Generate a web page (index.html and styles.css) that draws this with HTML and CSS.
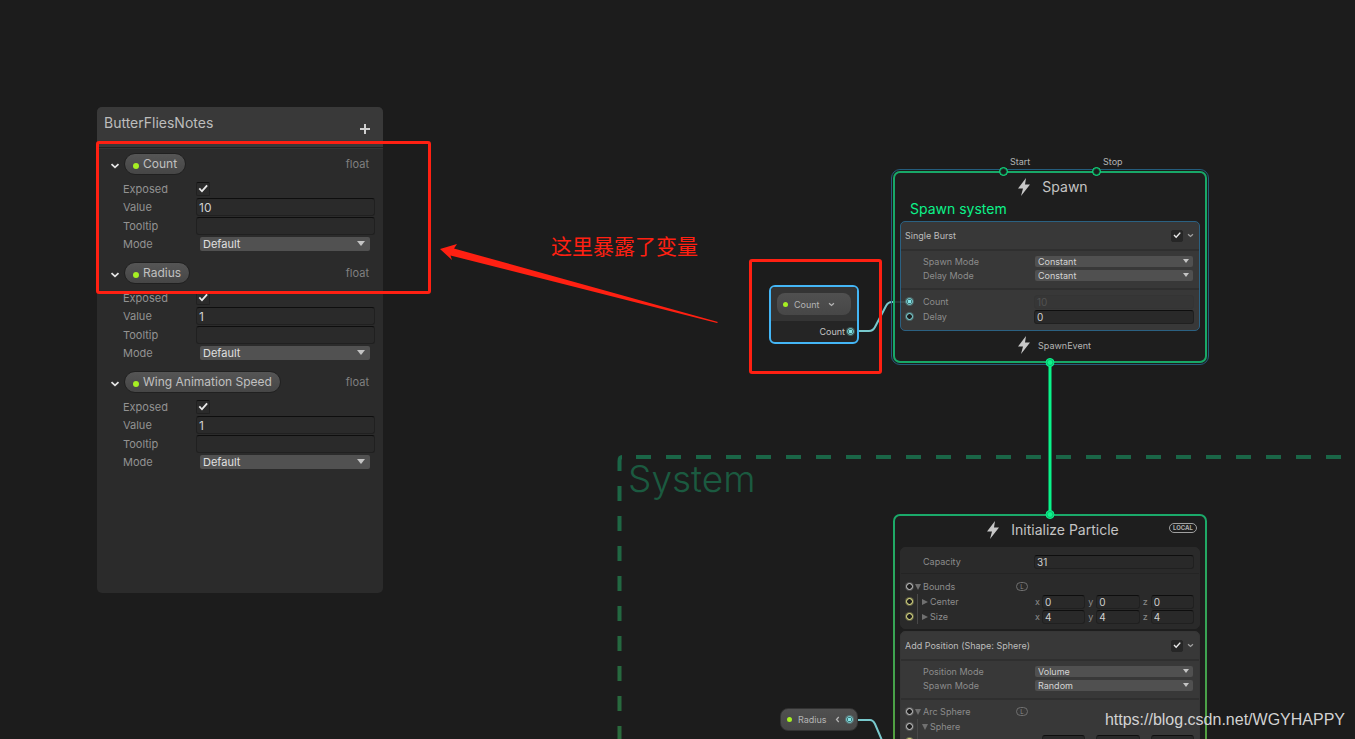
FILE: index.html
```html
<!DOCTYPE html>
<html lang="en">
<head>
<meta charset="utf-8">
<title>ButterFliesNotes</title>
<link rel="stylesheet" href="styles.css">
</head>
<body>
<svg class="defs" aria-hidden="true">
  <symbol id="bolt" viewBox="0 0 12 18"><path d="M8 0L0 10.500L5 10.500L3 18L12 6.500L7 6.500Z" fill="#c8c8c8"/></symbol>
  <symbol id="chevron" viewBox="0 0 10 6"><path d="M1.500 1.200L5 4.400L8.500 1.200" fill="none" stroke="currentColor" stroke-width="1.800"/></symbol>
</svg>
<main class="canvas">
  <svg class="wires" aria-hidden="true">
    <defs>
      <linearGradient id="sysline" gradientUnits="userSpaceOnUse" x1="0" y1="455" x2="0" y2="739">
        <stop offset="0" stop-color="#1a6647"/><stop offset="1" stop-color="#2a6a3c"/>
      </linearGradient>
    </defs>
    <path d="M622 457Q619.500 457 619.500 461V471" fill="none" stroke="#1a6647" stroke-width="4"/>
    <line x1="636" y1="457" x2="100%" y2="457" stroke="#1a6647" stroke-width="4" stroke-dasharray="15 15"/>
    <path d="M619.500 486V2000" stroke="url(#sysline)" stroke-width="4" stroke-dasharray="15 15"/>
    <path d="M858 331H869Q873 331 875 327L886 306Q888 302 892 302H895" fill="none" stroke="#78c8cc" stroke-width="2"/>
    <path d="M857 720H870Q873 720 875 724L884 745" fill="none" stroke="#78c8cc" stroke-width="2"/>
  </svg>

  <h2 class="system-title">System</h2>

  <section class="board">
    <header class="board-head"><h1>ButterFliesNotes</h1><button class="add" aria-label="Add property"></button></header>
    <div class="board-body">
      <section class="prop">
        <div class="prop-head"><button class="fold" aria-label="Collapse Count"><svg><use href="#chevron"/></svg></button><span class="pill"><i class="dot"></i>Count</span><span class="type">float</span></div>
        <div class="fields">
          <label for="e1">Exposed</label><input id="e1" type="checkbox" class="check" checked>
          <label for="v1">Value</label><input id="v1" class="text" value="10">
          <label for="t1">Tooltip</label><input id="t1" class="text">
          <label for="m1">Mode</label><span class="drop"><select id="m1"><option>Default</option></select></span>
        </div>
      </section>
      <section class="prop">
        <div class="prop-head"><button class="fold" aria-label="Collapse Radius"><svg><use href="#chevron"/></svg></button><span class="pill"><i class="dot"></i>Radius</span><span class="type">float</span></div>
        <div class="fields">
          <label for="e2">Exposed</label><input id="e2" type="checkbox" class="check" checked>
          <label for="v2">Value</label><input id="v2" class="text" value="1">
          <label for="t2">Tooltip</label><input id="t2" class="text">
          <label for="m2">Mode</label><span class="drop"><select id="m2"><option>Default</option></select></span>
        </div>
      </section>
      <section class="prop">
        <div class="prop-head"><button class="fold" aria-label="Collapse Wing Animation Speed"><svg><use href="#chevron"/></svg></button><span class="pill"><i class="dot"></i>Wing Animation Speed</span><span class="type">float</span></div>
        <div class="fields">
          <label for="e3">Exposed</label><input id="e3" type="checkbox" class="check" checked>
          <label for="v3">Value</label><input id="v3" class="text" value="1">
          <label for="t3">Tooltip</label><input id="t3" class="text">
          <label for="m3">Mode</label><span class="drop"><select id="m3"><option>Default</option></select></span>
        </div>
      </section>
    </div>
  </section>

  <section class="param count-node">
    <div class="param-top"><div class="param-pill"><i class="dot"></i><span>Count</span><svg class="mini"><use href="#chevron"/></svg></div></div>
    <div class="param-out"><span>Count</span><i class="port linked"></i></div>
  </section>

  <section class="param-pill radius-node"><i class="dot"></i><span>Radius</span><svg class="mini left"><use href="#chevron"/></svg><i class="port linked"></i></section>

  <section class="node spawn">
    <span class="flow-in start"><i></i>Start</span>
    <span class="flow-in stop"><i></i>Stop</span>
    <div class="node-title"><svg class="bolt"><use href="#bolt"/></svg><h2>Spawn</h2></div>
    <p class="node-label">Spawn system</p>
    <div class="block selected">
      <div class="block-head"><label for="sb">Single Burst</label><input id="sb" type="checkbox" class="check small" checked><button class="fold" aria-label="Collapse block"><svg><use href="#chevron"/></svg></button></div>
      <div class="part">
        <div class="row short"><label for="sm">Spawn Mode</label><span class="drop"><select id="sm"><option>Constant</option></select></span></div>
        <div class="row short"><label for="dm">Delay Mode</label><span class="drop"><select id="dm"><option>Constant</option></select></span></div>
      </div>
      <div class="part">
        <div class="row"><i class="port linked"></i><label for="ct">Count</label><input id="ct" class="text" value="10" disabled></div>
        <div class="row"><i class="port"></i><label for="dl">Delay</label><input id="dl" class="text" value="0"></div>
      </div>
    </div>
    <div class="node-foot"><svg class="bolt"><use href="#bolt"/></svg><span>SpawnEvent</span></div>
  </section>

  <section class="node init">
    <div class="node-title"><svg class="bolt"><use href="#bolt"/></svg><h2>Initialize Particle</h2><button class="local">LOCAL</button></div>
    <div class="block dark">
      <div class="part">
        <div class="row"><label for="cap">Capacity</label><input id="cap" class="text" value="31"></div>
      </div>
      <div class="part">
        <div class="row"><i class="port white"></i><span class="tree"><i class="tri"></i>Bounds</span><button class="space">L</button></div>
        <div class="row nest"><i class="port yellow"></i><span class="tree"><i class="tri closed"></i>Center</span>
          <span class="vec"><label for="cx">x</label><input id="cx" class="text" value="0"><label for="cy">y</label><input id="cy" class="text" value="0"><label for="cz">z</label><input id="cz" class="text" value="0"></span></div>
        <div class="row nest"><i class="port yellow"></i><span class="tree"><i class="tri closed"></i>Size</span>
          <span class="vec"><label for="sx">x</label><input id="sx" class="text" value="4"><label for="sy">y</label><input id="sy" class="text" value="4"><label for="sz">z</label><input id="sz" class="text" value="4"></span></div>
      </div>
    </div>
    <div class="block">
      <div class="block-head"><label for="ap">Add Position (Shape: Sphere)</label><input id="ap" type="checkbox" class="check small" checked><button class="fold" aria-label="Collapse block"><svg><use href="#chevron"/></svg></button></div>
      <div class="part">
        <div class="row short"><label for="pm">Position Mode</label><span class="drop"><select id="pm"><option>Volume</option></select></span></div>
        <div class="row short"><label for="rm">Spawn Mode</label><span class="drop"><select id="rm"><option>Random</option></select></span></div>
      </div>
      <div class="part">
        <div class="row"><i class="port white"></i><span class="tree"><i class="tri"></i>Arc Sphere</span><button class="space">L</button></div>
        <div class="row nest"><i class="port white"></i><span class="tree"><i class="tri"></i>Sphere</span></div>
        <div class="row nest"><i class="port yellow"></i>
          <span class="vec"><span></span><input class="text" aria-label="Center x"><span></span><input class="text" aria-label="Center y"><span></span><input class="text" aria-label="Center z"></span></div>
      </div>
    </div>
  </section>

  <svg class="wires" aria-hidden="true">
    <line x1="895" y1="302" x2="906" y2="302" stroke="#78c8cc" stroke-opacity=".25" stroke-width="1"/>
    <line x1="1050" y1="362" x2="1050" y2="515" stroke="#08f58a" stroke-width="3"/>
    <g fill="#08f58a" stroke="#08f58a"><circle cx="1050" cy="362.500" r="4"/><circle cx="1050" cy="514.500" r="4"/></g>
    <g fill="none" stroke="#0fb56c"><circle cx="1050" cy="362.500" r="3"/><circle cx="1050" cy="514.500" r="3"/></g>
    <path d="M440 249L457 244L454 248.500L718 322L717 323L450.500 255.500L452 260Z" fill="#ff2012"/>
  </svg>
  <p class="note" lang="zh">这里暴露了变量</p>
  <div class="frame frame-board"></div>
  <div class="frame frame-node"></div>
  <a class="mark" href="#">https://blog.csdn.net/WGYHAPPY</a>
</main>
</body>
</html>
```

FILE: styles.css
```css
* { box-sizing: border-box; }
body { margin: 0; background: #1c1c1c; color: #c4c4c4; font-family: Inter, "Noto Sans CJK SC", sans-serif; font-size: 11px; }
h1, h2, p { margin: 0; font-weight: 400; }
button { padding: 0; border: 0; background: none; color: inherit; font: inherit; }
input, select { margin: 0; font: inherit; }
i { display: block; flex: none; }
.defs { position: absolute; width: 0; height: 0; }
.canvas { position: relative; height: 100vh; overflow: hidden; }
.wires { position: absolute; inset: 0; width: 100%; height: 100%; pointer-events: none; }
.system-title { position: absolute; left: 628px; top: 456px; font-size: 37px; font-weight: 300; line-height: 46px; color: #1b5a40; }

/* Blackboard */
.board { position: absolute; left: 97px; top: 107px; width: 286px; min-height: 486px; border-radius: 5px; background: #2b2b2b; overflow: hidden; }
.board-head { display: flex; justify-content: space-between; align-items: flex-start; height: 41px; padding: 7px 13px 0 7px; background: #393939; border-bottom: 1px solid #202020; }
h1 { font-size: 14px; line-height: 18px; color: #bdbdbd; }
.add { width: 11px; height: 11px; margin-top: 9px; background: linear-gradient(#d0d0d0, #d0d0d0) center / 10px 2px no-repeat, linear-gradient(#d0d0d0, #d0d0d0) center / 2px 10px no-repeat; }
.board-body { padding: 4px 8px 0 13px; border-top: 1px solid #353535; }
.prop { margin-bottom: 9px; }
.prop-head { display: flex; align-items: center; height: 22px; margin-bottom: 5px; }
.fold { display: grid; color: #e4e4e4; }
.fold svg { width: 10px; height: 6px; }
.prop-head .fold { padding-top: 3px; }
.pill { display: flex; align-items: center; gap: 4px; height: 22px; margin-left: 4px; padding: 0 8px 1px 8px; border: 1px solid #202020; border-radius: 11px; background: linear-gradient(#555, #464646); font-size: 12px; color: #c0c0c0; }
.dot { width: 6px; height: 6px; border-radius: 3px; background: #a6f023; }
.pill .dot { margin-top: 4px; }
.type { margin: 0 6px 0 auto; color: #808080; }
.fields { display: grid; grid-template-columns: 73px 1fr; grid-template-rows: 18px 18px 19px 18px; align-items: center; padding-left: 13px; color: #929292; }
.check { appearance: none; position: relative; width: 14px; height: 14px; border: 1px solid #202020; border-top-color: #111; border-radius: 2px; background: #2a2a2a; }
.check:checked::before { content: ""; position: absolute; inset: 1px; background: #e8e8e8; clip-path: polygon(6% 50%, 20% 38%, 38% 60%, 84% 8%, 98% 20%, 40% 84%); }
.text { min-width: 0; width: 100%; height: 18px; padding: 0 2px; border: 1px solid #202020; border-top-color: #0e0e0e; border-radius: 3px; background: #2a2a2a; color: #d0d0d0; font-size: 12px; }
.drop { position: relative; display: flex; height: 14px; }
.drop::after { content: ""; position: absolute; right: 5px; top: 4px; border: 4px solid transparent; border-top: 5px solid #c4c4c4; border-bottom: 0; pointer-events: none; }
.drop select { appearance: none; width: 100%; padding: 0 3px; border: 0; border-radius: 2px; background: #515151; color: #e0e0e0; }
.fields .drop { margin: 0 5px 0 4px; }

/* Parameter nodes */
.param-pill { display: flex; align-items: center; height: 22px; padding: 0 6px; border-radius: 8px; background: linear-gradient(#505050, #474747); font-size: 9px; color: #b4b4b4; }
.param-pill span { margin-left: 6px; }
.param-pill .dot { width: 5px; height: 5px; }
.mini { width: 7px; height: 5px; margin-left: 8px; }
.count-node { position: absolute; left: 769px; top: 285px; width: 90px; border: 2px solid #44b6f6; border-radius: 6px; overflow: hidden; background: #252525; font-size: 9px; }
.param-top { padding: 6px; background: #343434; }
.param-out { display: flex; align-items: center; justify-content: flex-end; gap: 2px; height: 21px; padding-right: 3px; }
.radius-node { position: absolute; left: 780px; top: 708px; width: 78px; height: 23px; padding: 0 4px 0 6px; border: 1px solid #333; }
.mini.left { transform: rotate(90deg); margin-left: 7px; }
.radius-node .port { margin-left: auto; }
.port { width: 7px; height: 7px; border: 1px solid #84e4e7; border-radius: 4px; background: #1c1c1c; box-shadow: 0 0 0 1px #84e4e744; }
.port.linked { background: radial-gradient(#84e4e7 45%, #275052 60%); }
.port.white { border-color: #d0d0d0; box-shadow: 0 0 0 1px #d0d0d033; }
.port.yellow { border-color: #f2f290; box-shadow: 0 0 0 1px #f2f29044; }

/* Context nodes */
.node { position: absolute; width: 314px; padding: 0 5px 2px; border: 2px solid transparent; border-radius: 7px; }
.spawn { left: 893px; top: 171px; background: linear-gradient(#1e1e1e, #1e1e1e) padding-box, #18a868 border-box; outline: 1px solid #245c7c; outline-offset: 1px; }
.init { left: 893px; top: 514px; background: linear-gradient(#1e1e1e, #1e1e1e) padding-box, linear-gradient(#1aaa6a, #5a9e3c) border-box; }
.node-title { position: relative; display: flex; align-items: center; justify-content: center; gap: 12px; height: 28px; padding-left: 6px; }
.node-title h2 { font-size: 14px; line-height: 18px; }
.bolt { width: 12px; height: 18px; }
.node-label { padding-left: 10px; font-size: 14px; line-height: 16px; margin-bottom: 4px; color: #0cf28a; }
.node-foot { display: flex; align-items: center; justify-content: center; gap: 8px; height: 28px; padding-left: 9px; font-size: 9px; color: #b4b4b4; }
.flow-in { position: absolute; top: -16px; font-size: 9px; line-height: 10px; padding-left: 11px; color: #b4b4b4; }
.flow-in i { position: absolute; left: 0; top: 10px; width: 9px; height: 9px; border: 1px solid #0cf28a; border-radius: 5px; background: #1c1c1c; box-shadow: inset 0 0 0 1px #0cf28a55; }
.start { left: 104px; }
.stop { left: 197px; }
.local { position: absolute; right: 3px; top: 7px; padding: 0 3px; border: 1px solid #a0a0a0; border-radius: 5px; font-size: 6px; line-height: 8px; font-weight: 700; color: #b0b0b0; }
.block { border: 1px solid #363636; border-radius: 5px; background: #383838; font-size: 9px; color: #8c8c8c; }
.block + .block { margin-top: 2px; }
.block.selected { border-color: #2b6182; }
.block.dark { border-color: #2a2a2a; background: #2a2a2a; }
.init .node-title { margin-bottom: 3px; }
.block-head { display: flex; align-items: center; height: 27px; padding: 0 5px 0 4px; color: #bcbcbc; }
.check.small { width: 12px; height: 12px; margin: 0 4px 0 auto; background: #262626; border-color: #262626; }
.block-head .fold svg { width: 7px; height: 5px; color: #a0a0a0; }
.part { padding: 3px 5px 6px 0; }
.part + .part, .block-head + .part { border-top: 2px solid #2f2f2f; }
.part + .part { padding-top: 4px; }
.dark .part { padding: 6px 5px 4px 0; }
.dark .part + .part { padding-top: 5px; border-top: 1px solid #242424; }
.row { position: relative; display: grid; grid-template-columns: 17px 111px 1fr; align-items: center; height: 15px; padding-left: 5px; }
.row.short { height: 14px; }
.row > * { grid-row: 1; }
.row > label, .row > .tree { grid-column: 2; }
.row > .port { grid-column: 1; }
.row > .text, .row > .drop, .row > .vec { grid-column: 3; }
.row .drop { height: 11px; margin: 0 1px; }
.row .drop select { padding: 0 3px; background: #505050; color: #d4d4d4; }
.row .drop::after { right: 4px; top: 3px; border-width: 4px 3px 0; }
.row .text { height: 14px; padding: 0 2px; background: #292929; font-size: 10px; }
.row .text:disabled { border-color: #343434; background: #363636; color: #515151; }
.tree { display: flex; align-items: center; gap: 2px; margin-left: -8px; }
.tri { border: 3px solid transparent; border-top: 6px solid #707070; border-bottom: 0; }
.tri.closed { border: 3px solid transparent; border-left: 6px solid #707070; border-right: 0; }
.nest .tree { margin-left: -1px; }
.nest::before { content: ""; position: absolute; left: 16px; top: 0; bottom: 0; width: 1px; background: #484848; }
.space { grid-column: 2; justify-self: end; width: 12px; height: 9px; margin-right: 6px; border: 1px solid #707070; border-radius: 5px; font-size: 6px; line-height: 7px; }
.vec { display: grid; grid-template-columns: 8px 1fr 11px 1fr 11px 1fr; align-items: center; }
.vec label { padding-left: 1px; }
.vec label + input + label { padding-left: 3px; }

/* Annotations */
.frame { position: absolute; border: 3px solid #ff2012; border-radius: 3px; pointer-events: none; }
.frame-board { left: 96px; top: 141px; width: 335px; height: 153px; }
.frame-node { left: 749px; top: 259px; width: 133px; height: 115px; }
.note { position: absolute; left: 551px; top: 232px; font-family: "Noto Sans CJK SC", sans-serif; font-size: 21px; line-height: 26px; color: #ff2012; }
.mark { position: absolute; right: 10px; bottom: 9px; font-family: "Liberation Sans", sans-serif; font-size: 16px; line-height: 20px; color: #d2d2d2; text-decoration: none; }
```
